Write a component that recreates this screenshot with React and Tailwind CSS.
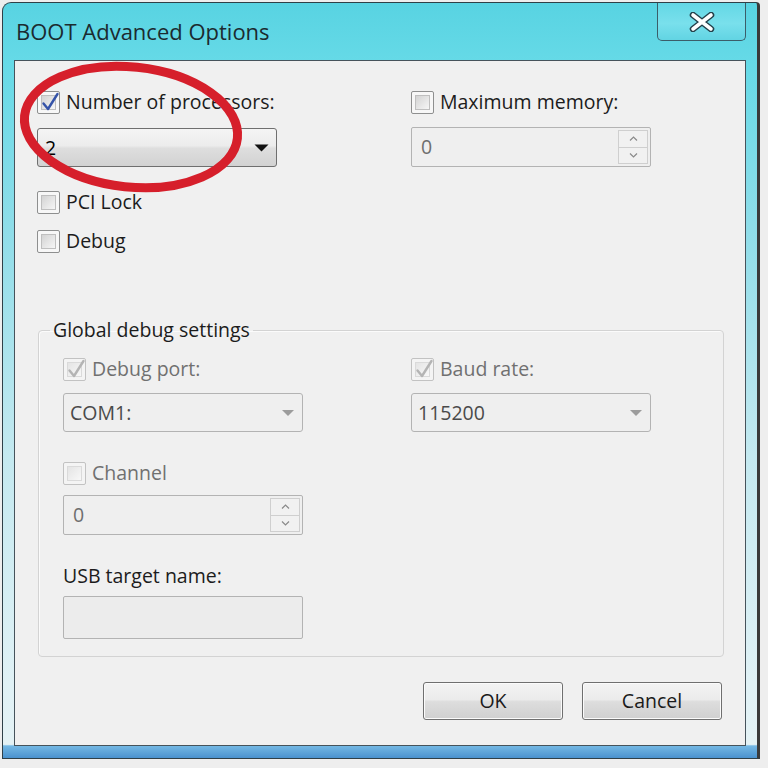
import React from "react";

const CheckBox = ({ checked, disabled }) => (
  <span
    className={`flex h-[23px] w-[23px] shrink-0 rounded-[2px] border p-[3px] ${
      disabled ? "border-[#c2c2c2] bg-[#f4f4f4]" : "border-[#8e8f8f] bg-[#f7f7f7]"
    }`}
  >
    <span
      className={`relative flex h-full w-full border ${
        disabled
          ? "border-[#dadada] bg-[linear-gradient(135deg,#e4e4e4,#f8f8f8)]"
          : "border-[#bfbfbf] bg-[linear-gradient(135deg,#d3d3d3,#f6f6f6)]"
      }`}
    >
      {checked && (
        <svg
          className="absolute left-[-1px] top-[-4px]"
          width="19"
          height="20"
          viewBox="0 0 19 20"
          fill="none"
        >
          <path
            d="M2.5 11.5 L7 17 L16.5 2"
            stroke={disabled ? "#b4b4b4" : "#3553a8"}
            strokeWidth="2.4"
            strokeLinejoin="round"
            strokeLinecap="round"
          />
        </svg>
      )}
    </span>
  </span>
);

const CheckRow = ({ label, checked, disabled }) => (
  <div className="flex h-[24px] items-center gap-[6px]">
    <CheckBox checked={checked} disabled={disabled} />
    <span className={`text-[19.5px] leading-[26px] ${disabled ? "text-[#707070]" : "text-[#1c1c1c]"}`}>
      {label}
    </span>
  </div>
);

const Select = ({ value, disabled }) => (
  <div
    className={`flex h-[39px] w-[240px] items-center justify-between rounded-[3px] border pr-[7px] ${
      disabled
        ? "border-[#b3b3b3] bg-[#efefef] pl-[6px] text-[#4a4a4a]"
        : "border-[#6f6f6f] bg-[linear-gradient(180deg,#f4f4f4_0%,#ececec_45%,#dedede_52%,#d2d2d2_100%)] pl-[7px] text-black"
    }`}
  >
    <span className="text-[19.5px] leading-[26px]">{value}</span>
    {disabled ? (
      <svg width="14" height="8" viewBox="0 0 14 8">
        <path d="M1 1 L13 1 L7 7 Z" fill="#9c9c9c" />
      </svg>
    ) : (
      <svg width="15" height="8" viewBox="0 0 15 8">
        <path d="M0.5 0.5 L14.5 0.5 L7.5 7.5 Z" fill="#111" />
      </svg>
    )}
  </div>
);

const Caret = ({ up }) => (
  <svg width="9" height="5" viewBox="0 0 9 5" fill="none">
    <path d={up ? "M1 4.5 L4.5 1 L8 4.5" : "M1 0.5 L4.5 4 L8 0.5"} stroke="#8a8a8a" strokeWidth="1.2" />
  </svg>
);

const Spin = ({ value }) => (
  <div className="flex h-[40px] w-[240px] rounded-[2px] border border-[#b3b3b3] bg-[#efefef]">
    <span className="flex flex-1 items-center pl-[9px] text-[19.5px] leading-[26px] text-[#6e6e6e]">{value}</span>
    <div className="my-[2px] mr-[2px] flex w-[30px] flex-col border border-[#cfcfcf] bg-[#f1f1f1]">
      <span className="flex flex-1 items-center justify-center border-b border-[#cfcfcf]">
        <Caret up />
      </span>
      <span className="flex flex-1 items-center justify-center">
        <Caret />
      </span>
    </div>
  </div>
);

const Btn = ({ children }) => (
  <button className="flex h-[38px] w-[140px] items-center justify-center rounded-[3px] border border-[#6f6f6f] bg-[linear-gradient(180deg,#f3f3f3_0%,#ebebeb_46%,#dddddd_52%,#d0d0d0_100%)] text-[19.5px] leading-[26px] text-[#1a1a1a] shadow-[inset_0_0_0_1px_#fbfbfb]">
    {children}
  </button>
);

export default function App() {
  return (
    <div className="relative h-[768px] w-[768px] overflow-hidden bg-[#eeeeee] font-['Open_Sans','Noto_Sans',sans-serif]">
      {/* window */}
      <div className="ml-[2px] mt-[2px] flex h-[757px] w-[758px] flex-col rounded-tl-[9px] rounded-tr-[4px] border border-r-[3px] border-[#2f4048] border-r-[#3a3a3a] bg-[linear-gradient(180deg,#58d3e2_0%,#66dae7_8%,#8fdde9_30%,#c4e9f0_60%,#e0f1f5_90%,#e4f2f5_98.2%,#74b8e4_98.4%,#4a92cf_100%)] pb-[12px]">
        {/* title bar */}
        <div className="flex h-[57px] shrink-0 items-start justify-between pl-[13px] pr-[11px]">
          <div className="mt-[13px] text-[22px] leading-[30px] text-[#1b2a30]">BOOT Advanced Options</div>
          <button className="flex h-[38px] w-[89px] items-center justify-center rounded-b-[5px] border border-t-0 border-[#3b5d69] bg-[linear-gradient(180deg,#63d7e5_0%,#79e0ec_55%,#62d4e3_100%)]">
            <svg width="26" height="20" viewBox="0 0 26 20" fill="none">
              <path d="M4 3 L22 17 M22 3 L4 17" stroke="#24404a" strokeWidth="6.5" strokeLinecap="round" />
              <path d="M4 3 L22 17 M22 3 L4 17" stroke="#ffffff" strokeWidth="3.6" strokeLinecap="round" />
            </svg>
          </button>
        </div>

        {/* client area */}
        <div className="mx-[11px] flex flex-1 flex-col border border-[#46535b] bg-[#f0f0f0] pl-[22px] pr-[21px] pt-[29px]">
          <div className="grid grid-cols-[374px_1fr]">
            <div className="flex flex-col">
              <CheckRow label="Number of processors:" checked />
              <div className="mt-[14px]">
                <Select value="2" />
              </div>
              <div className="mt-[23px]">
                <CheckRow label="PCI Lock" />
              </div>
              <div className="mt-[15px]">
                <CheckRow label="Debug" />
              </div>
            </div>
            <div className="flex flex-col">
              <CheckRow label="Maximum memory:" />
              <div className="mt-[13px]">
                <Spin value="0" />
              </div>
            </div>
          </div>

          <fieldset className="ml-[1px] mt-[64px] rounded-[4px] border border-[#d3d3d3] pb-[17px] pl-[24px] shadow-[inset_1px_1px_0_#fbfbfb]">
            <legend className="-ml-[13px] px-[3px] text-[19.5px] leading-[26px] text-[#1c1c1c]">
              Global debug settings
            </legend>
            <div className="grid grid-cols-[348px_1fr] pt-[14px]">
              <div className="flex flex-col">
                <CheckRow label="Debug port:" checked disabled />
                <div className="mt-[12px]">
                  <Select value="COM1:" disabled />
                </div>
                <div className="mt-[29px]">
                  <CheckRow label="Channel" disabled />
                </div>
                <div className="mt-[10px]">
                  <Spin value="0" />
                </div>
                <div className="mt-[28px] text-[19.5px] leading-[26px] text-[#1c1c1c]">USB target name:</div>
                <div className="mt-[7px] h-[43px] w-[240px] rounded-[2px] border border-[#b3b3b3] bg-[#ececec]" />
              </div>
              <div className="flex flex-col">
                <CheckRow label="Baud rate:" checked disabled />
                <div className="mt-[12px]">
                  <Select value="115200" disabled />
                </div>
              </div>
            </div>
          </fieldset>

          <div className="mr-[2px] mt-[25px] flex justify-end gap-[19px]">
            <Btn>OK</Btn>
            <Btn>Cancel</Btn>
          </div>
        </div>
      </div>

      {/* red annotation ellipse */}
      <svg className="pointer-events-none absolute left-0 top-0" width="768" height="768" fill="none">
        <ellipse cx="131" cy="127" rx="107" ry="60" transform="rotate(6 131 127)" stroke="#d61f2b" strokeWidth="9" />
      </svg>
    </div>
  );
}
